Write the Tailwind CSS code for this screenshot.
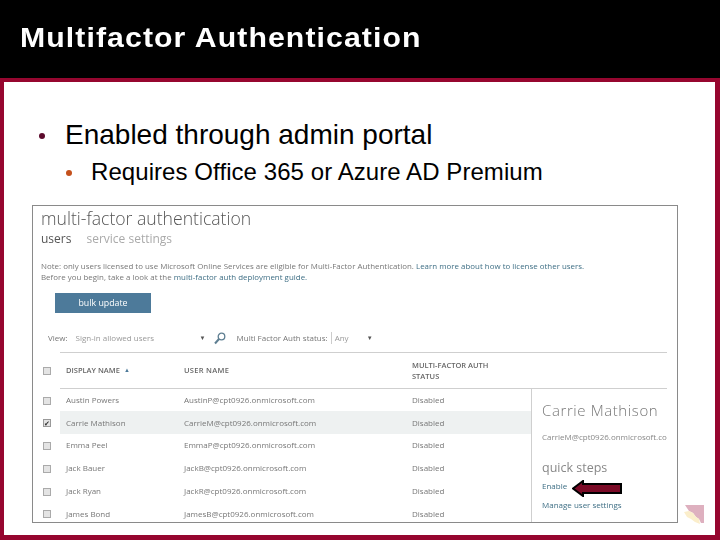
<!DOCTYPE html>
<html lang="en">
<head>
    <meta charset="UTF-8">
    <title>Multifactor Authentication</title>
    <script src="https://cdn.jsdelivr.net/npm/@tailwindcss/browser@4"></script>
</head>
<body class="w-[720px] h-[540px] overflow-hidden bg-black font-['Liberation_Sans',Arial,sans-serif]">
    <div class="h-[78px] pl-[20px] pt-[22px]">
        <h1 class="w-fit text-white font-bold text-[28px] leading-[32px] tracking-[1px] whitespace-nowrap scale-x-[1.08] origin-left">Multifactor Authentication</h1>
    </div>
    <div class="relative h-[462px] bg-white border-l-[4px] border-r-[5px] border-t-[4px] border-b-[5px] border-[#96062f] pl-[28px]">
        <!-- bullets -->
        <div class="flex items-center h-[32px] mt-[37px] ml-[7px] text-black text-[28px] whitespace-nowrap">
            <span class="w-[6px] h-[6px] rounded-full bg-[#5c0a2c] mr-[20px] mt-[2px]"></span>
            <span>Enabled through admin portal</span>
        </div>
        <div class="flex items-center h-[26px] mt-[8px] ml-[34px] text-black text-[24px] tracking-[0.07px] whitespace-nowrap">
            <span class="w-[6px] h-[6px] rounded-full bg-[#c4501c] mr-[19px] mt-[1px]"></span>
            <span>Requires Office 365 or Azure AD Premium</span>
        </div>

        <!-- screenshot -->
        <div class="w-[646px] h-[318px] mt-[20px] border border-[#8a8a8a] bg-white overflow-hidden">
            <div class="blur-[0.4px] font-['Open_Sans',sans-serif] text-[#777]">
                <div class="pl-[8px] text-[17.6px] leading-[24px] font-light text-[#555] mb-[1px]">multi-factor authentication</div>
                <div class="pl-[8px] flex text-[12px] leading-[16px] h-[16px]">
                    <span class="text-[#555]">users</span>
                    <span class="ml-[15px] text-[#aaa]">service settings</span>
                </div>
                <div class="pl-[8px] mt-[14px] text-[7.9px] leading-[11px] tracking-[0.02px] whitespace-nowrap text-[#777]">
                    <p>Note: only users licensed to use Microsoft Online Services are eligible for Multi-Factor Authentication. <span class="text-[#3f6f85]">Learn more about how to license other users.</span></p>
                    <p>Before you begin, take a look at the <span class="text-[#3f6f85]">multi-factor auth deployment guide.</span></p>
                </div>
                <div class="ml-[22px] mt-[10px] w-[96px] h-[20px] bg-[#4d7a9a] text-white text-[8.8px] leading-[21px] text-center">bulk update</div>
                <div class="flex items-center h-[18px] mt-[16px] pl-[15px] text-[8px] whitespace-nowrap">
                    <span>View:</span>
                    <span class="ml-[8px] w-[124px] text-[#999]">Sign-in allowed users</span>
                    <span class="text-[6px] text-[#555]">▼</span>
                    <svg class="ml-[8px] w-[12px] h-[13px]" viewBox="0 0 12 13" fill="none" stroke="#5f7f92"><circle cx="7.5" cy="4.5" r="3.3" stroke-width="1.3"/><path d="M5 7 L1 11.5" stroke-width="2"/></svg>
                    <span class="ml-[11px]">Multi Factor Auth status:</span>
                    <span class="ml-[3px] pl-[3px] border-l border-[#ccc] w-[36px] text-[#999]">Any</span>
                    <span class="text-[6px] text-[#555]">▼</span>
                </div>

                <div class="ml-[27px] w-[607px] mt-[5px] border-t border-[#cfcfcf]">
                    <div class="relative h-[36px] border-b border-[#cfcfcf] flex items-center text-[7.5px] leading-[11px] font-semibold text-[#666]">
                        <span class="absolute -left-[17px] top-[14px] w-[8px] h-[8px] bg-[#e4e4e4] border border-[#aaa]"></span>
                        <span class="pl-[6px] w-[124px] flex items-center gap-[4px]">DISPLAY NAME <span class="text-[6px] text-[#4d7a9a]">▲</span></span>
                        <span class="w-[228px] tracking-[0.3px]">USER NAME</span>
                        <span>MULTI-FACTOR AUTH<br>STATUS</span>
                    </div>
                    <div class="flex">
                        <div class="w-[471px] -mt-[0.5px] text-[8px] whitespace-nowrap">
                            <div class="relative h-[22.8px] flex items-center">
                                <span class="absolute -left-[17px] top-[8px] w-[8px] h-[8px] bg-[#e4e4e4] border border-[#aaa]"></span>
                                <span class="pl-[6px] w-[124px]">Austin Powers</span><span class="w-[228px]">AustinP@cpt0926.onmicrosoft.com</span><span>Disabled</span>
                            </div>
                            <div class="relative h-[22.8px] flex items-center bg-[#eef1f1]">
                                <span class="absolute -left-[17px] top-[8px] w-[8px] h-[8px] bg-[#e4e4e4] border border-[#999] text-[7px] leading-[7px] text-[#333] text-center">✔</span>
                                <span class="pl-[6px] w-[124px]">Carrie Mathison</span><span class="w-[228px]">CarrieM@cpt0926.onmicrosoft.com</span><span>Disabled</span>
                            </div>
                            <div class="relative h-[22.8px] flex items-center">
                                <span class="absolute -left-[17px] top-[8px] w-[8px] h-[8px] bg-[#e4e4e4] border border-[#aaa]"></span>
                                <span class="pl-[6px] w-[124px]">Emma Peel</span><span class="w-[228px]">EmmaP@cpt0926.onmicrosoft.com</span><span>Disabled</span>
                            </div>
                            <div class="relative h-[22.8px] flex items-center">
                                <span class="absolute -left-[17px] top-[8px] w-[8px] h-[8px] bg-[#e4e4e4] border border-[#aaa]"></span>
                                <span class="pl-[6px] w-[124px]">Jack Bauer</span><span class="w-[228px]">JackB@cpt0926.onmicrosoft.com</span><span>Disabled</span>
                            </div>
                            <div class="relative h-[22.8px] flex items-center">
                                <span class="absolute -left-[17px] top-[8px] w-[8px] h-[8px] bg-[#e4e4e4] border border-[#aaa]"></span>
                                <span class="pl-[6px] w-[124px]">Jack Ryan</span><span class="w-[228px]">JackR@cpt0926.onmicrosoft.com</span><span>Disabled</span>
                            </div>
                            <div class="relative h-[22.8px] flex items-center">
                                <span class="absolute -left-[17px] top-[8px] w-[8px] h-[8px] bg-[#e4e4e4] border border-[#aaa]"></span>
                                <span class="pl-[6px] w-[124px]">James Bond</span><span class="w-[228px]">JamesB@cpt0926.onmicrosoft.com</span><span>Disabled</span>
                            </div>
                        </div>
                        <div class="relative flex-1 border-l border-[#cfcfcf] pl-[10px] pt-[10px] h-[138px] overflow-hidden whitespace-nowrap">
                            <div class="text-[15px] leading-[22px] text-[#777] tracking-[0.6px] font-light">Carrie Mathison</div>
                            <div class="mt-[10px] text-[8px] leading-[12px] text-[#888]">CarrieM@cpt0926.onmicrosoft.com</div>
                            <div class="mt-[16px] text-[12.5px] leading-[18px] text-[#888]">quick steps</div>
                            <div class="mt-[2px] text-[8px] leading-[14px] text-[#3f6f85]">Enable</div>
                            <div class="mt-[5px] text-[8px] leading-[14px] text-[#3f6f85]">Manage user settings</div>
                        </div>
                    </div>
                </div>
            </div>
        </div>

        <!-- red arrow over the Enable link -->
        <svg class="absolute left-[568px] top-[398px] w-[50px] h-[17px]" viewBox="0 0 50 17"><path d="M1 8.5 L11 1 L11 4 L49 4 L49 13 L11 13 L11 16 Z" fill="#7a0a26" stroke="#000" stroke-width="2"/></svg>

        <!-- corner logo -->
        <svg class="absolute left-[680px] top-[423px] w-[21px] h-[19px]" viewBox="0 0 21 19">
            <path d="M1 0 H20 V18 H17 L15 14 L12 12 L9 8 L5 6 Z" fill="#deb0bf"/>
            <path d="M0 7 L5 6 L9 8 L12 12 L15 14 L16 19 L11 17 L7 14 L3 12 Z" fill="#fbeecb"/>
        </svg>
    </div>
</body>
</html>
